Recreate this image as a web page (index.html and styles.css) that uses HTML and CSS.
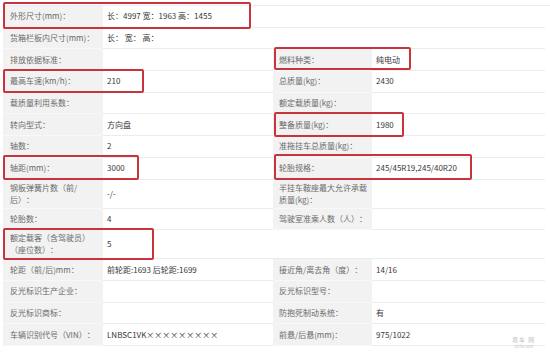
FILE: index.html
```html
<!DOCTYPE html>
<html lang="zh-CN">
<head>
<meta charset="utf-8">
<title>车辆参数</title>
<link rel="stylesheet" href="styles.css">
</head>
<body>
<div class="page">
  <div class="sheet">
    <div class="lbl">外形尺寸(mm)：</div>
    <div class="val span3">长：4997 宽：1963 高：1455</div>

    <div class="lbl">货箱栏板内尺寸(mm)：</div>
    <div class="val span3">长： 宽： 高：</div>

    <div class="lbl">排放依据标准：</div>
    <div class="val"></div>
    <div class="lbl lbl2">燃料种类：</div>
    <div class="val">纯电动</div>

    <div class="lbl">最高车速(km/h)：</div>
    <div class="val">210</div>
    <div class="lbl lbl2">总质量(kg)：</div>
    <div class="val">2430</div>

    <div class="lbl">载质量利用系数：</div>
    <div class="val"></div>
    <div class="lbl lbl2">额定载质量(kg)：</div>
    <div class="val"></div>

    <div class="lbl">转向型式：</div>
    <div class="val">方向盘</div>
    <div class="lbl lbl2">整备质量(kg)：</div>
    <div class="val">1980</div>

    <div class="lbl">轴数：</div>
    <div class="val">2</div>
    <div class="lbl lbl2">准拖挂车总质量(kg)：</div>
    <div class="val"></div>

    <div class="lbl">轴距(mm)：</div>
    <div class="val">3000</div>
    <div class="lbl lbl2">轮胎规格：</div>
    <div class="val">245/45R19,245/40R20</div>

    <div class="lbl">钢板弹簧片数（前/<br>后）：</div>
    <div class="val">-/-</div>
    <div class="lbl lbl2">半挂车鞍座最大允许承载<br>质量(kg)：</div>
    <div class="val"></div>

    <div class="lbl">轮胎数：</div>
    <div class="val">4</div>
    <div class="lbl lbl2">驾驶室准乘人数（人）：</div>
    <div class="val"></div>

    <div class="lbl">额定载客（含驾驶员）<br>（座位数）：</div>
    <div class="val">5</div>
    <div class="blank span2"></div>

    <div class="lbl">轮距（前/后)mm：</div>
    <div class="val">前轮距:1693 后轮距:1699</div>
    <div class="lbl lbl2">接近角/离去角（度）：</div>
    <div class="val">14/16</div>

    <div class="lbl">反光标识生产企业：</div>
    <div class="val"></div>
    <div class="lbl lbl2">反光标识型号：</div>
    <div class="val"></div>

    <div class="lbl">反光标识商标：</div>
    <div class="val"></div>
    <div class="lbl lbl2">防抱死制动系统：</div>
    <div class="val">有</div>

    <div class="lbl">车辆识别代号（VIN）：</div>
    <div class="val">LNBSC1VK×××××××××</div>
    <div class="lbl lbl2">前悬/后悬(mm)：</div>
    <div class="val">975/1022</div>
  </div>

  <div class="mark m1"></div>
  <div class="mark m2"></div>
  <div class="mark m3"></div>
  <div class="mark m4"></div>
  <div class="mark m5"></div>
  <div class="mark m6"></div>
  <div class="mark m7"></div>

  <div class="watermark"><span class="wm-main">易车 网</span><span class="wm-sub">yiche.com</span></div>
</div>
</body>
</html>
```

FILE: styles.css
```css
* { box-sizing: border-box; }
html, body { margin: 0; padding: 0; background: #fff; }
body {
  font-family: "Noto Sans CJK SC", "Noto Sans", sans-serif;
  font-size: 8px;
  line-height: 12px;
  text-spacing-trim: space-all;
  font-feature-settings: "chws" 0, "halt" 0;
}
.page {
  position: relative;
  width: 550px;
  height: 353px;
  overflow: hidden;
  padding: 5px 0 0 3px;
}
.sheet {
  display: grid;
  grid-template-columns: 100px 170px 99px 173px;
  grid-template-rows: repeat(8, 21.7px) 29px 21.7px 29px repeat(4, 21.7px);
  border-top: 1px solid #ececec;
}
.lbl, .val, .blank {
  display: flex;
  align-items: center;
  border-bottom: 1px solid #ececec;
  white-space: nowrap;
}
.lbl {
  background: #f2f2f2;
  color: #6a6a6a;
  padding-left: 7px;
  border-bottom-color: #f8f8f8;
}
.lbl2 { padding-left: 6px; }
.val {
  color: #383838;
  padding-left: 4px;
}
.span3 { grid-column: span 3; }
.span2 { grid-column: span 2; }

.mark {
  position: absolute;
  border: 2px solid #c9333b;
  border-radius: 2px;
}
.m1 { left: 3px; top: 2px; width: 248px; height: 27px; }
.m2 { left: 274px; top: 47px; width: 137px; height: 23px; }
.m3 { left: 3px; top: 69px; width: 141px; height: 24px; }
.m4 { left: 274px; top: 112px; width: 130px; height: 25px; }
.m5 { left: 3px; top: 155px; width: 136px; height: 25px; }
.m6 { left: 274px; top: 154px; width: 198px; height: 26px; }
.m7 { left: 3px; top: 228px; width: 151px; height: 32px; }

.watermark {
  position: absolute;
  left: 512px;
  top: 336px;
  display: flex;
  flex-direction: column;
  align-items: center;
  gap: 1px;
  color: #c4c4c4;
}
.wm-main { font-size: 6px; line-height: 7px; letter-spacing: 1px; }
.wm-sub { font-size: 4px; line-height: 5px; }
```
